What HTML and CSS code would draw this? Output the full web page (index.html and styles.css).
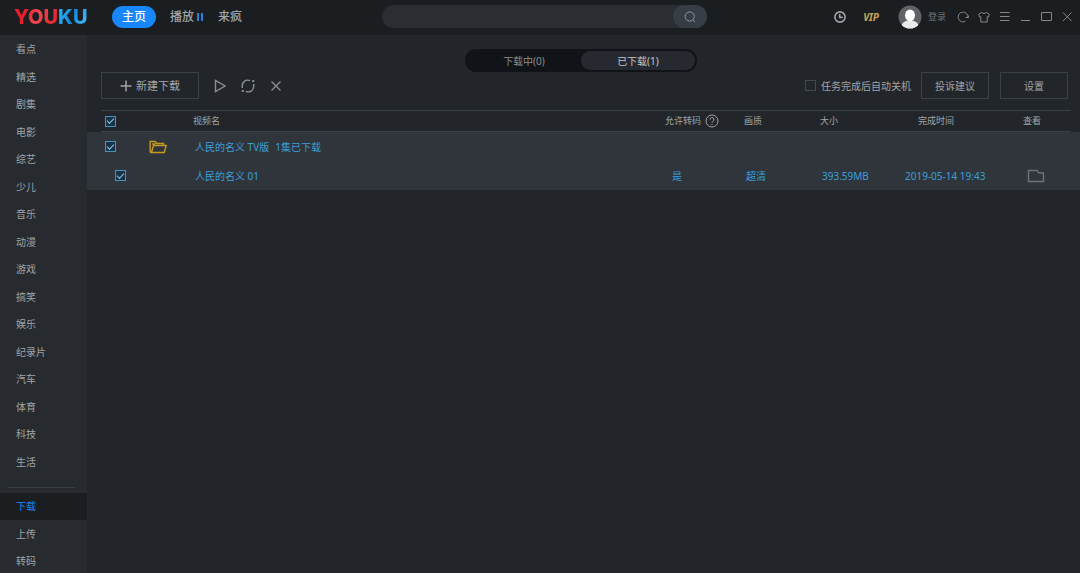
FILE: index.html
```html
<!DOCTYPE html>
<html lang="zh-CN">
<head>
<meta charset="utf-8">
<title>YOUKU</title>
<link rel="stylesheet" href="styles.css">
</head>
<body>
<div class="app">
  <header class="topbar">
    <div class="topbar-left">
      <div class="logo"><span class="logo-red">YOU</span><span class="logo-blue">KU</span></div>
      <nav class="tabs">
        <a class="tab tab-active" href="#">主页</a>
        <a class="tab" href="#">播放<svg class="bars" viewBox="0 0 8 8"><path d="M2 0v8M6 0v8" stroke="#2581dc" stroke-width="2"/></svg></a>
        <a class="tab" href="#">来疯</a>
      </nav>
    </div>
    <form class="search">
      <input class="search-input" type="text" aria-label="搜索">
      <button class="search-button" type="button" aria-label="搜索"><svg class="icon" viewBox="0 0 12 12"><circle cx="5.7" cy="5.5" r="4.6"/><path d="M9 9l2.2 2.2"/></svg></button>
    </form>
    <div class="topbar-right">
      <button class="icon-button history" aria-label="历史"><svg class="icon icon-bold" viewBox="0 0 12 12"><circle cx="6" cy="6" r="5.1"/><path d="M5.7 3v3.4h3"/></svg></button>
      <a class="vip" href="#">VIP</a>
      <a class="user" href="#"><svg class="avatar" viewBox="0 0 24 24"><clipPath id="disc"><circle cx="12" cy="12" r="11.5"/></clipPath><g clip-path="url(#disc)"><path d="M0 0h24v24H0z" fill="#5f6367"/><ellipse cx="12" cy="21.5" rx="8.6" ry="6.3" fill="#e9eaeb"/><ellipse cx="12" cy="10.3" rx="5" ry="5.9" fill="#fff"/></g></svg>登录</a>
      <div class="window-tools">
        <button class="icon-button" aria-label="刷新"><svg class="icon" viewBox="0 0 12 12"><path d="M8.4 10.3A4.9 4.9 0 1 1 10.9 6.500M8.500 6.500h2.900V4.500"/></svg></button>
        <button class="icon-button" aria-label="皮肤"><svg class="icon" viewBox="0 0 12 12"><path d="M3.800 1.300L.600 3.400l1 2.600 1.200-.3V11h6.400V5.700l1.200.3 1-2.600L8.200 1.300C7.400 2.800 4.600 2.800 3.800 1.300z"/></svg></button>
        <button class="icon-button" aria-label="菜单"><svg class="icon" viewBox="0 0 12 12"><path d="M1 1.500h9.500M1 5.500h9.500M1 9.500h9.500"/></svg></button>
        <button class="icon-button" aria-label="最小化"><svg class="icon" viewBox="0 0 12 12"><path d="M1 9.500h9"/></svg></button>
        <button class="icon-button" aria-label="最大化"><svg class="icon" viewBox="0 0 12 12"><path d="M.500 1.500h10v8H.500z"/></svg></button>
        <button class="icon-button" aria-label="关闭"><svg class="icon" viewBox="0 0 12 12"><path d="M1 1.500l8.500 8.500M9.500 1.500L1 10"/></svg></button>
      </div>
    </div>
  </header>

  <div class="body">
    <nav class="sidebar">
      <ul class="side-list">
        <li><a href="#">看点</a></li>
        <li><a href="#">精选</a></li>
        <li><a href="#">剧集</a></li>
        <li><a href="#">电影</a></li>
        <li><a href="#">综艺</a></li>
        <li><a href="#">少儿</a></li>
        <li><a href="#">音乐</a></li>
        <li><a href="#">动漫</a></li>
        <li><a href="#">游戏</a></li>
        <li><a href="#">搞笑</a></li>
        <li><a href="#">娱乐</a></li>
        <li><a href="#">纪录片</a></li>
        <li><a href="#">汽车</a></li>
        <li><a href="#">体育</a></li>
        <li><a href="#">科技</a></li>
        <li><a href="#">生活</a></li>
      </ul>
      <hr class="side-rule">
      <ul class="side-list">
        <li><a class="side-active" href="#">下载</a></li>
        <li><a href="#">上传</a></li>
        <li><a href="#">转码</a></li>
      </ul>
    </nav>

    <main class="content">
      <div class="switch-row">
        <div class="switch">
          <button class="switch-item">下载中(0)</button>
          <button class="switch-item switch-active">已下载(1)</button>
        </div>
      </div>

      <div class="toolbar">
        <button class="button button-new"><svg class="icon plus" viewBox="0 0 12 12"><path d="M6 .500v11M.500 6h11"/></svg>新建下载</button>
        <div class="actions">
          <button class="icon-button" aria-label="开始"><svg class="icon action" viewBox="0 0 14 14"><path d="M2.500 1.500v11L12 7z"/></svg></button>
          <button class="icon-button" aria-label="转码"><svg class="icon action" viewBox="0 0 14 14"><path d="M1.300 9V7A5.500 5.500 0 0 1 9 1.600M12.700 5v2A5.500 5.500 0 0 1 5 12.400"/><path d="M11.200 2h2M.800 12h2" stroke-width="2"/></svg></button>
          <button class="icon-button" aria-label="删除"><svg class="icon action" viewBox="0 0 14 14"><path d="M2.500 2.500l9 9M11.500 2.500l-9 9"/></svg></button>
        </div>
        <label class="shutdown"><input class="check check-dim" type="checkbox">任务完成后自动关机</label>
        <button class="button">投诉建议</button>
        <button class="button">设置</button>
      </div>

      <table class="downloads">
        <colgroup>
          <col class="col-start"><col class="col-check"><col class="col-folder"><col><col class="col-convert"><col class="col-quality"><col class="col-size"><col class="col-time"><col class="col-view"><col class="col-end">
        </colgroup>
        <thead>
          <tr>
            <td></td>
            <th class="cell-check"><input class="check" type="checkbox" checked aria-label="全选"></th>
            <th></th>
            <th>视频名</th>
            <th><span class="with-help">允许转码<svg class="icon help" viewBox="0 0 14 14"><circle cx="7" cy="7" r="6"/><path d="M5 5.600a2 2 0 1 1 2.800 1.800Q7 7.800 7 8.800M7 10v1"/></svg></span></th>
            <th>画质</th>
            <th>大小</th>
            <th class="cell-time">完成时间</th>
            <th>查看</th>
            <td></td>
          </tr>
        </thead>
        <tbody>
          <tr>
            <td></td>
            <td class="cell-check"><input class="check" type="checkbox" checked aria-label="选择人民的名义 TV版"></td>
            <td><svg class="folder" viewBox="0 0 18 14"><path d="M1.200 12.500v-11h5l1.300 2H14.500v2M1.200 12.500h14L17.200 5.500H4.500L2.500 12.500M3.200 4h3"/></svg></td>
            <td colspan="6"><span class="series">人民的名义 TV版<span>1集已下载</span></span></td>
            <td></td>
          </tr>
          <tr>
            <td></td>
            <td class="cell-child"><input class="check" type="checkbox" checked aria-label="选择人民的名义 01"></td>
            <td></td>
            <td class="name">人民的名义 01</td>
            <td class="cell-yes">是</td>
            <td class="name">超清</td>
            <td class="name">393.59MB</td>
            <td>2019-05-14 19:43</td>
            <td class="cell-view"><button class="icon-button" aria-label="查看文件夹"><svg class="open" viewBox="0 0 18 14"><path d="M1.500 1.500h8.500l2 2.500h4.500v8.500h-15z"/></svg></button></td>
            <td></td>
          </tr>
        </tbody>
      </table>
    </main>
  </div>
</div>
</body>
</html>
```
FILE: styles.css
```css
* {
  box-sizing: border-box;
}

body {
  margin: 0;
  background: #22262a;
  color: #a0a4a7;
  font: 10px/14px "Noto Sans", "Noto Sans CJK SC", sans-serif;
}

a {
  color: inherit;
  text-decoration: none;
}

button,
input {
  margin: 0;
  padding: 0;
  border: 0;
  background: none;
  color: inherit;
  font: inherit;
}

.app {
  display: flex;
  flex-direction: column;
  height: 100vh;
  overflow: hidden;
}

.icon {
  display: block;
  width: 12px;
  height: 12px;
  fill: none;
  stroke: currentColor;
  stroke-width: 1;
}

.icon-bold {
  stroke-width: 1.6;
}

.icon-button {
  display: block;
  flex: none;
}

/* Top bar */

.topbar {
  display: grid;
  grid-template-columns: 1fr 325px 1fr;
  align-items: center;
  flex: none;
  height: 35px;
  padding: 0 6px 2px 14px;
  background: #1b1e21;
}

.topbar-left,
.topbar-right,
.tabs,
.user,
.window-tools {
  display: flex;
  align-items: center;
}

.logo {
  width: 98px;
  font-family: Inter, "Noto Sans", sans-serif;
  font-size: 20px;
  line-height: 22px;
  font-weight: 800;
}

.logo-red,
.logo-blue {
  background: linear-gradient(110deg, #e8202c, #e8202c 30%, #f0484f 50%, #e3202d);
  background-clip: text;
  color: transparent;
}

.logo-blue {
  background-image: linear-gradient(110deg, #36b5f2, #1686dd 50%, #49c6ff);
}

.tabs {
  gap: 14px;
  font-size: 12px;
  line-height: 22px;
}

.tab {
  display: flex;
  align-items: center;
  gap: 2px;
  font-weight: 500;
}

.tab-active {
  padding: 0 10px;
  border-radius: 11px;
  background: #1787fb;
  color: #fff;
}

.bars {
  width: 8px;
  height: 8px;
}

.search {
  display: flex;
  height: 23px;
  border-radius: 12px;
  background: #2a2d32;
}

.search-input {
  flex: 1;
  min-width: 0;
  padding-left: 12px;
  outline: 0;
}

.search-button {
  display: grid;
  place-items: center;
  width: 34px;
  border-radius: 12px;
  background: #373d44;
  color: #8b949c;
}

.topbar-right {
  justify-content: flex-end;
}

.vip {
  margin: 0 19px 0 17px;
  color: #c9a355;
  font-weight: 700;
  font-style: italic;
}

.user {
  gap: 6px;
  margin-right: 11px;
  color: #70757a;
  font-size: 9px;
}

.avatar {
  width: 24px;
  height: 24px;
}

.window-tools {
  gap: 9px;
  color: #85888b;
}

/* Sidebar */

.body {
  display: flex;
  flex: 1;
  min-height: 0;
}

.sidebar {
  flex: none;
  width: 87px;
  padding-top: 1px;
  overflow: hidden;
  background: #272b2f;
}

.side-list {
  margin: 0;
  padding: 0;
  list-style: none;
}

.side-list a {
  display: block;
  padding-left: 16px;
  line-height: 27px;
}

.side-list li:nth-child(even) a {
  line-height: 28px;
}

.side-list .side-active {
  background: #1b1e21;
  color: #1787fb;
}

.side-rule {
  height: 1px;
  margin: 11px 12px 5px 8px;
  border: 0;
  background: #3a3f43;
}

/* Content */

.content {
  flex: 1;
  min-width: 0;
}

.switch-row {
  display: flex;
  justify-content: center;
  padding: 14px 5px 0 0;
}

.switch {
  display: flex;
  width: 232px;
  height: 23px;
  padding: 2px;
  border-radius: 12px;
  background: #101317;
}

.switch-item {
  flex: 1;
  border-radius: 10px;
  color: #8b8f93;
}

.switch-active {
  background: #262a30;
  color: #c3c6c9;
}

.toolbar {
  display: flex;
  align-items: center;
  padding: 0 12px 0 14px;
  margin-bottom: 11px;
}

.button {
  width: 68px;
  height: 27px;
  border: 1px solid #3c4146;
}

.button + .button {
  margin-left: 11px;
}

.button-new {
  display: flex;
  align-items: center;
  justify-content: center;
  gap: 4px;
  width: 98px;
  font-size: 11px;
}

.plus {
  stroke-width: 1.5;
}

.actions {
  display: flex;
  gap: 14px;
  margin: 0 auto 0 14px;
  color: #8b8f92;
}

.action {
  width: 14px;
  height: 14px;
  stroke-width: 1.4;
}

.shutdown {
  display: flex;
  align-items: center;
  gap: 5px;
  margin-right: 10px;
}

.check {
  display: grid;
  place-items: center;
  width: 11px;
  height: 11px;
  border: 1px solid #4593be;
  background: #173347;
  appearance: none;
}

.check:checked::after {
  width: 6px;
  height: 3px;
  margin-bottom: 2px;
  border: solid #8dc4e2;
  border-width: 0 0 1px 1px;
  content: "";
  transform: rotate(-45deg);
}

.check-dim {
  border-color: #44494e;
  background: none;
}

/* Table */

.downloads {
  width: 100%;
  border-collapse: separate;
  border-spacing: 0;
  table-layout: fixed;
}

.col-start { width: 14px; }
.col-check { width: 48px; }
.col-folder { width: 44px; }
.col-convert { width: 79px; }
.col-quality { width: 76px; }
.col-size { width: 85px; }
.col-time { width: 118px; }
.col-view { width: 48px; }
.col-end { width: 9px; }

.downloads th,
.downloads td {
  padding: 0;
  text-align: left;
  white-space: nowrap;
}

.downloads th {
  height: 22px;
  border: solid #3c4146;
  border-width: 1px 0;
  font-size: 9px;
  line-height: 14px;
  font-weight: 400;
}

.downloads tbody {
  background: #30353c;
  color: #3a9fdb;
}

.downloads tbody td {
  height: 29px;
}

.downloads .cell-check {
  padding-left: 4px;
}

.downloads .cell-child {
  padding-left: 14px;
}

.downloads .cell-time {
  padding-left: 13px;
}

.downloads .cell-yes {
  padding-left: 7px;
}

.downloads .cell-view {
  padding-left: 4px;
}

.downloads .name {
  padding-left: 2px;
}

.with-help {
  display: flex;
  align-items: center;
  gap: 4px;
}

.help {
  width: 14px;
  height: 14px;
}

.series {
  display: flex;
  gap: 6px;
  padding-left: 2px;
}

.folder,
.open {
  display: block;
  width: 18px;
  height: 14px;
  fill: none;
  stroke: #c69a1f;
  stroke-width: 1.4;
}

.open {
  stroke: #6c7177;
}
```
